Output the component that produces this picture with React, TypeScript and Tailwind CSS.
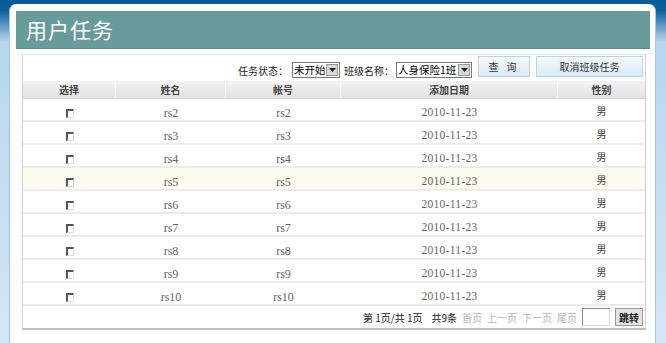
const rows = ['rs2', 'rs3', 'rs4', 'rs5', 'rs6', 'rs7', 'rs8', 'rs9', 'rs10'];

const cols = ['w-[93px]', 'w-[110px]', 'w-[115px]', 'w-[217px]', 'flex-1'];

const Checkbox = () => (
  <span className="block w-[8px] h-[9px] border-t-2 border-l-2 border-t-[#555] border-l-[#555] border-r border-b border-r-[#ddd] border-b-[#ddd] bg-white" />
);

const Select = ({ label, width }: { label: string; width: string }) => (
  <div className={`${width} h-[16px] flex items-center border border-[#7a7a7a] bg-white`}>
    <span className="flex-1 pl-[1px] text-[10.5px] leading-none text-black whitespace-nowrap">{label}</span>
    <span className="w-[12px] h-[12px] mr-[1px] shrink-0 flex items-center justify-center bg-[#d8d8d8] border border-[#999]">
      <svg width="7" height="4" viewBox="0 0 7 4">
        <path d="M0 0h7L3.5 4z" fill="#222" />
      </svg>
    </span>
  </div>
);

export default function App() {
  return (
    <div
      className="w-[666px] h-[343px] overflow-hidden pl-[9px] pr-[10px] pt-[4px] bg-[linear-gradient(to_bottom,#0b5a98_0px,#0d5d9b_10px,#b8d6ee_42px,#d3e6f5_100%)]"
      style={{ fontFamily: '"Noto Sans CJK SC", "Noto Sans", sans-serif' }}
    >
      <div className="h-full bg-white rounded-t-[7px] border-l border-r border-[#9fc8e8] pl-[6px] pr-[5px] pt-[7px]">
        {/* Title bar */}
        <div className="h-[38px] bg-[#699b9b] flex items-center pl-[10px] border-b border-[#5b8a8a]">
          <h1 className="text-[21px] text-white tracking-[1px]">用户任务</h1>
        </div>

        {/* Inner box */}
        <div className="ml-[6px] mr-[4px] mt-[5px] border-l border-r border-[#d0d0d0] border-b-2 border-b-[#bdbdbd] text-[10px] whitespace-nowrap">
          {/* Toolbar */}
          <div className="h-[27px] flex items-start justify-end pr-[2px] border-t border-[#e0e0e0]">
            <span className="text-[#222] mt-[8px]">任务状态：</span>
            <div className="mt-[7px] ml-[4px]">
              <Select label="未开始" width="w-[48px]" />
            </div>
            <span className="text-[#222] mt-[8px] ml-[4px]">班级名称：</span>
            <div className="mt-[7px] ml-[2px]">
              <Select label="人身保险1班" width="w-[76px]" />
            </div>
            <button className="w-[52px] h-[21px] ml-[6px] mt-[1px] text-[10px] tracking-[3px] text-[#333] bg-[linear-gradient(to_bottom,#f4f9fd,#d9eaf7)] border border-[#c3cfd9]">
              查 询
            </button>
            <button className="w-[107px] h-[21px] ml-[6px] mt-[1px] text-[10px] text-[#333] bg-[linear-gradient(to_bottom,#f4f9fd,#d9eaf7)] border border-[#c3cfd9]">
              取消班级任务
            </button>
          </div>

          {/* Header */}
          <div className="h-[18px] flex bg-[linear-gradient(to_bottom,#f3f3f3,#e2e2e2)] border-b border-[#d6d6d6] font-bold text-[#444]">
            {['选择', '姓名', '帐号', '添加日期', '性别'].map((h, i) => (
              <div
                key={h}
                className={`${cols[i]} flex items-center justify-center ${i < 4 ? 'border-r border-[#fafafa]' : ''}`}
              >
                {h}
              </div>
            ))}
          </div>

          {/* Rows */}
          {rows.map((r) => (
            <div
              key={r}
              className={`h-[23px] flex border-b-2 border-[#ececec] ${r === 'rs5' ? 'bg-[#fdfaee]' : 'bg-white'}`}
            >
              <div className={`${cols[0]} flex items-center justify-center pt-[7px]`}>
                <Checkbox />
              </div>
              <div className={`${cols[1]} flex items-center justify-center pt-[7px] text-[#666] font-['Liberation_Serif',serif] text-[12px]`}>
                {r}
              </div>
              <div className={`${cols[2]} flex items-center justify-center pt-[7px] text-[#666] font-['Liberation_Serif',serif] text-[12px]`}>
                {r}
              </div>
              <div className={`${cols[3]} flex items-center justify-center pt-[7px] text-[#666] font-['Liberation_Serif',serif] text-[11.5px] tracking-[0.3px]`}>
                2010-11-23
              </div>
              <div className={`${cols[4]} flex justify-center pt-[4px] text-[#444] text-[10px]`}>男</div>
            </div>
          ))}

          {/* Pagination */}
          <div className="h-[22px] flex items-center justify-end gap-[5px] pr-[2px]">
            <span className="text-[#222]">第 1页/共 1页</span>
            <span className="text-[#222] ml-[4px]">共9条</span>
            <span className="text-[#b5b5b5]">首页</span>
            <span className="text-[#b5b5b5]">上一页</span>
            <span className="text-[#b5b5b5]">下一页</span>
            <span className="text-[#b5b5b5]">尾页</span>
            <span className="w-[28px] h-[18px] border border-[#888] border-r-[#ddd] border-b-[#ddd] bg-white" />
            <button className="w-[28px] h-[18px] text-[10px] font-bold text-[#222] bg-[#e4e4e4] border border-[#999]">
              跳转
            </button>
          </div>
        </div>
      </div>
    </div>
  );
}
